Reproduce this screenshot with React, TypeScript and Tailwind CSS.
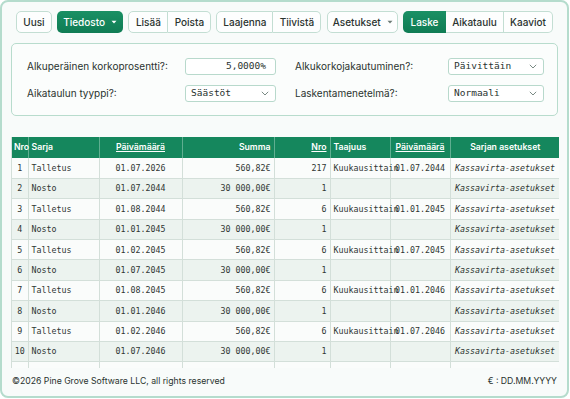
import React from "react";

const Caret = ({ color }: { color: string }) => (
  <svg width="6" height="4" viewBox="0 0 6 4" className="ml-[6px]">
    <path d="M0.5 0.8 L5.5 0.8 L3 3.4 Z" fill={color} />
  </svg>
);

const Chevron = () => (
  <svg width="8" height="5" viewBox="0 0 8 5">
    <path d="M0.8 0.8 L4 4 L7.2 0.8" fill="none" stroke="#7a8a84" strokeWidth="1" />
  </svg>
);

const btn =
  "h-[22px] flex items-center justify-center text-[10px] font-medium text-[#2a332f] bg-[#fdfefe] border border-[#c3ded3]";

type Row = {
  n: number | string;
  s: string;
  d: string;
  sum: string;
  nro: string;
  t: string;
  d2: string;
  k: string;
};

const K = "Kassavirta-asetukset";

const rows: Row[] = [
  { n: 1, s: "Talletus", d: "01.07.2026", sum: "560,82€", nro: "217", t: "Kuukausittain", d2: "01.07.2044", k: K },
  { n: 2, s: "Nosto", d: "01.07.2044", sum: "30 000,00€", nro: "1", t: "", d2: "", k: K },
  { n: 3, s: "Talletus", d: "01.08.2044", sum: "560,82€", nro: "6", t: "Kuukausittain", d2: "01.01.2045", k: K },
  { n: 4, s: "Nosto", d: "01.01.2045", sum: "30 000,00€", nro: "1", t: "", d2: "", k: K },
  { n: 5, s: "Talletus", d: "01.02.2045", sum: "560,82€", nro: "6", t: "Kuukausittain", d2: "01.07.2045", k: K },
  { n: 6, s: "Nosto", d: "01.07.2045", sum: "30 000,00€", nro: "1", t: "", d2: "", k: K },
  { n: 7, s: "Talletus", d: "01.08.2045", sum: "560,82€", nro: "6", t: "Kuukausittain", d2: "01.01.2046", k: K },
  { n: 8, s: "Nosto", d: "01.01.2046", sum: "30 000,00€", nro: "1", t: "", d2: "", k: K },
  { n: 9, s: "Talletus", d: "01.02.2046", sum: "560,82€", nro: "6", t: "Kuukausittain", d2: "01.07.2046", k: K },
  { n: 10, s: "Nosto", d: "01.07.2046", sum: "30 000,00€", nro: "1", t: "", d2: "", k: K },
  { n: "", s: "", d: "", sum: "", nro: "", t: "", d2: "", k: "" },
];

const td = "border-r border-b border-[#d3dfd9] h-[20.4px] p-0 whitespace-nowrap";
const th = "border-r border-[#5fae90] p-0 whitespace-nowrap font-semibold";

export default function App() {
  return (
    <div className="w-[570px] h-[399px] bg-white font-['Inter',sans-serif] text-[#2a332f]">
      <div className="w-[569px] h-[398px] border-2 border-[#b5dccd] rounded-[8px] bg-[#f8fbfa] px-[9px] pt-[9px] flex flex-col">
        {/* Toolbar */}
        <div className="flex items-center px-[5px] h-[22px]">
          <div className={`${btn} w-[36px] rounded-[5px]`}>Uusi</div>
          <div className="ml-[5px] h-[22px] w-[67px] rounded-[5px] bg-gradient-to-b from-[#1a9064] to-[#0f7c54] text-white text-[10px] font-medium flex items-center justify-center">
            Tiedosto
            <Caret color="#ffffff" />
          </div>
          <div className="ml-[5px] flex">
            <div className={`${btn} w-[40px] rounded-l-[5px]`}>Lisää</div>
            <div className={`${btn} w-[43px] rounded-r-[5px] border-l-0`}>Poista</div>
          </div>
          <div className="ml-[5px] flex">
            <div className={`${btn} w-[57px] rounded-l-[5px]`}>Laajenna</div>
            <div className={`${btn} w-[48px] rounded-r-[5px] border-l-0`}>Tiivistä</div>
          </div>
          <div className={`${btn} ml-[6px] w-[71px] rounded-[5px]`}>
            Asetukset
            <Caret color="#6b7a74" />
          </div>
          <div className="ml-[5px] flex">
            <div className="h-[22px] w-[43px] rounded-l-[5px] bg-gradient-to-b from-[#1a9064] to-[#0f7c54] text-white text-[10px] font-medium flex items-center justify-center">
              Laske
            </div>
            <div className={`${btn} w-[58px] border-l-0`}>Aikataulu</div>
            <div className={`${btn} w-[49px] rounded-r-[5px] border-l-0`}>Kaaviot</div>
          </div>
        </div>

        {/* Settings panel */}
        <div className="mt-[10px] h-[73px] border border-[#b8dccd] rounded-[5px] bg-[#fbfdfc] pl-[15px] pr-[13px] pt-[14px] grid grid-cols-2 gap-x-[19px] gap-y-[10px] content-start text-[10px]">
          <div className="flex items-center justify-between h-[17px]">
            <span>Alkuperäinen korkoprosentti?:</span>
            <div className="w-[91px] h-[17px] border border-[#b8d9cc] rounded-[3px] bg-white flex items-center justify-end pr-[9px] font-['DejaVu_Sans_Mono',monospace] text-[9.5px]">
              5,0000%
            </div>
          </div>
          <div className="flex items-center justify-between h-[17px]">
            <span>Alkukorkojakautuminen?:</span>
            <div className="w-[96px] h-[17px] border border-[#b8d9cc] rounded-[3px] bg-white flex items-center justify-between pl-[5px] pr-[6px] font-['DejaVu_Sans_Mono',monospace] text-[9.5px]">
              <span>Päivittäin</span>
              <Chevron />
            </div>
          </div>
          <div className="flex items-center justify-between h-[17px]">
            <span>Aikataulun tyyppi?:</span>
            <div className="w-[91px] h-[17px] border border-[#b8d9cc] rounded-[3px] bg-white flex items-center justify-between pl-[5px] pr-[6px] font-['DejaVu_Sans_Mono',monospace] text-[9.5px]">
              <span>Säästöt</span>
              <Chevron />
            </div>
          </div>
          <div className="flex items-center justify-between h-[17px]">
            <span>Laskentamenetelmä?:</span>
            <div className="w-[96px] h-[17px] border border-[#b8d9cc] rounded-[3px] bg-white flex items-center justify-between pl-[5px] pr-[6px] font-['DejaVu_Sans_Mono',monospace] text-[9.5px]">
              <span>Normaali</span>
              <Chevron />
            </div>
          </div>
        </div>

        {/* Table */}
        <div className="mt-[21px] w-[548px] h-[231px] overflow-hidden border-l border-[#d3dfd9]">
          <table className="table-fixed border-collapse w-[548px]">
            <colgroup>
              <col className="w-[16px]" />
              <col className="w-[71px]" />
              <col className="w-[83px]" />
              <col className="w-[92px]" />
              <col className="w-[56px]" />
              <col className="w-[60px]" />
              <col className="w-[60px]" />
              <col className="w-[110px]" />
            </colgroup>
            <thead>
              <tr className="bg-[#15875d] text-white text-[8.7px] h-[21px]">
                <th className={`${th} text-left pl-[2px]`}>Nro</th>
                <th className={`${th} text-left pl-[3px]`}>Sarja</th>
                <th className={`${th} text-center`}>
                  <span className="underline">Päivämäärä</span>
                </th>
                <th className={`${th} text-right pr-[3px]`}>Summa</th>
                <th className={`${th} text-right pr-[3px]`}>
                  <span className="underline">Nro</span>
                </th>
                <th className={`${th} text-left pl-[3px]`}>Taajuus</th>
                <th className={`${th} text-center`}>
                  <span className="underline">Päivämäärä</span>
                </th>
                <th className={`${th} text-center border-r-0`}>Sarjan asetukset</th>
              </tr>
            </thead>
            <tbody className="font-['DejaVu_Sans_Mono',monospace] text-[8.3px] text-[#2f3633]">
              {rows.map((r, i) => (
                <tr key={i} className={i % 2 === 1 ? "bg-[#ecf3ef]" : "bg-[#fafcfb]"}>
                  <td className={`${td} text-center`}>{r.n}</td>
                  <td className={`${td} text-left pl-[3px]`}>{r.s}</td>
                  <td className={`${td} text-center`}>{r.d}</td>
                  <td className={`${td} text-right pr-[3px]`}>{r.sum}</td>
                  <td className={`${td} text-right pr-[3px]`}>{r.nro}</td>
                  <td className={`${td} text-left pl-[3px]`}>{r.t}</td>
                  <td className={`${td} text-center`}>{r.d2}</td>
                  <td className={`${td} text-center italic`}>{r.k}</td>
                </tr>
              ))}
            </tbody>
          </table>
        </div>

        {/* Footer */}
        <div className="flex-1 flex items-center justify-between text-[8.7px] px-[1px] pb-[1px]">
          <span>©2026 Pine Grove Software LLC, all rights reserved</span>
          <span>€ : DD.MM.YYYY</span>
        </div>
      </div>
    </div>
  );
}
